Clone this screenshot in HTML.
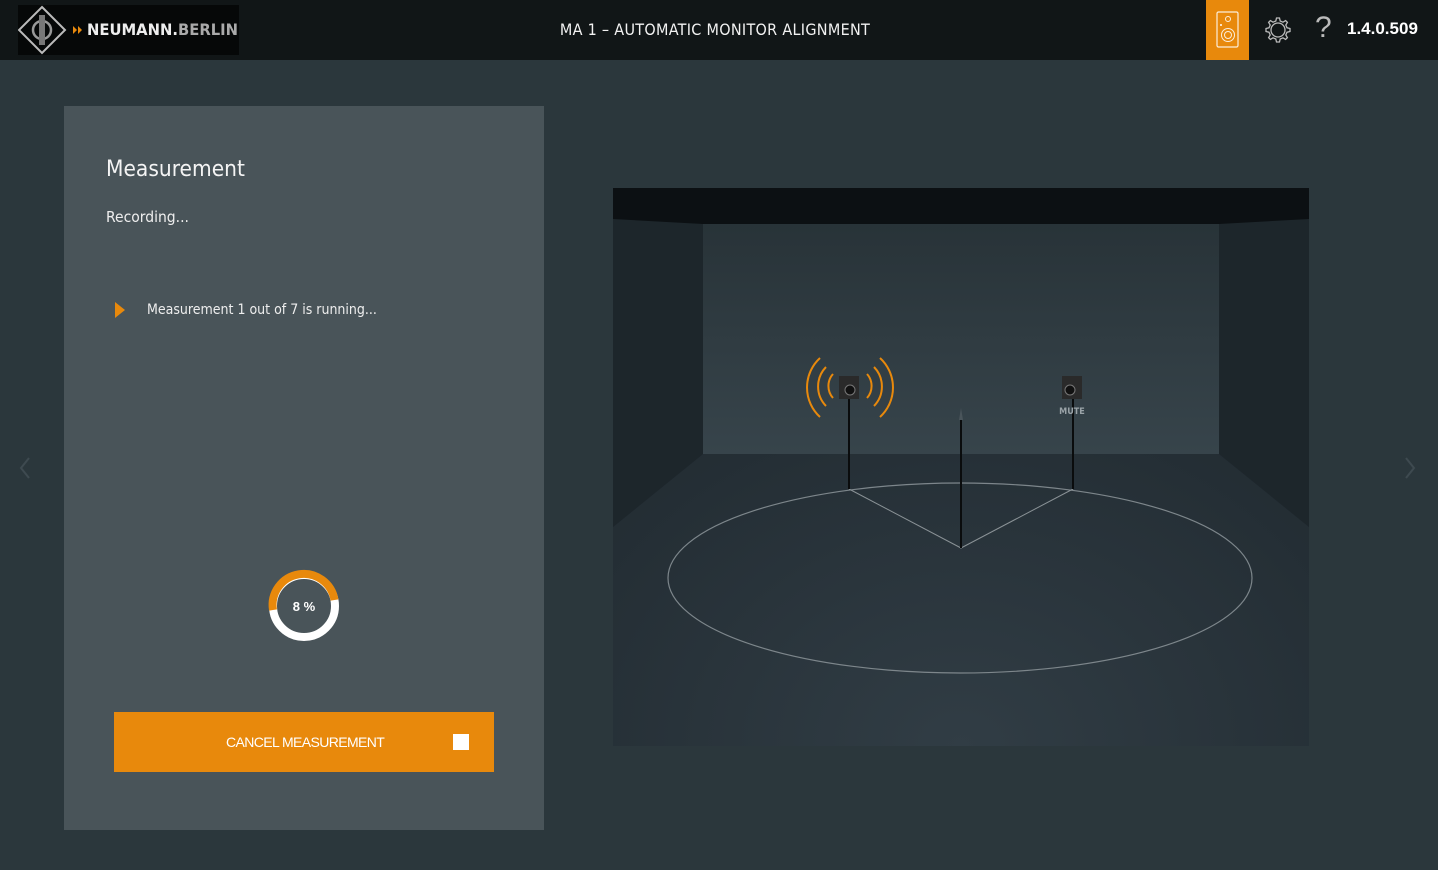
<!DOCTYPE html>
<html><head><meta charset="utf-8"><style>
*{margin:0;padding:0;box-sizing:border-box}
body{width:1438px;height:870px;overflow:hidden;background:#2b373c;font-family:"DejaVu Sans Condensed","Liberation Sans",sans-serif;color:#fff;position:relative}
.hdr{position:absolute;left:0;top:0;width:1438px;height:60px;background:#111617}
.logo{position:absolute;left:18px;top:5px;width:221px;height:50px;background:#060808}
.title{position:absolute;left:-4px;width:1438px;top:20px;text-align:center;font-size:16px;letter-spacing:0.3px;color:#f2f2f2}
.spk{position:absolute;left:1206px;top:0;width:43px;height:60px;background:#e8890c}
.ver{position:absolute;left:1347px;top:19px;font-family:"Liberation Sans",sans-serif;font-weight:bold;font-size:17px;color:#fff}
.panel{position:absolute;left:64px;top:106px;width:480px;height:724px;background:#495459}
.h1{position:absolute;left:106px;top:156px;font-size:22.5px;color:#f4f4f4}
.rec{position:absolute;left:106px;top:208px;font-size:15.5px;color:#eee}
.run{position:absolute;left:147px;top:302px;font-size:14px;color:#eee}
.tri{position:absolute;left:115px;top:302px;width:0;height:0;border-left:10px solid #e8890c;border-top:8px solid transparent;border-bottom:8px solid transparent}
.btn{position:absolute;left:114px;top:712px;width:380px;height:60px;background:#e8890c}
.btn span{position:absolute;left:112px;top:22px;font-family:"Liberation Sans",sans-serif;font-size:14px;letter-spacing:-0.6px;color:#fff}
.btn i{position:absolute;left:339px;top:22px;width:16px;height:16px;background:#fff}
</style></head><body>
<div class="hdr">
 <div class="logo">
  <svg width="221" height="50" viewBox="0 0 221 50">
   <polygon points="24,2 47,25 24,48 1,25" fill="none" stroke="#bbb" stroke-width="2"/>
   <circle cx="24" cy="25" r="9" fill="none" stroke="#999" stroke-width="2.5"/>
   <rect x="21" y="10" width="6" height="30" fill="#777"/>
   <polygon points="55,21 59,25 55,29" fill="#e8890c"/><polygon points="60,21 64,25 60,29" fill="#e8890c"/>
   <text x="69" y="30" font-family="DejaVu Sans Condensed, Liberation Sans, sans-serif" font-weight="bold" font-size="16" fill="#eee" textLength="151" lengthAdjust="spacingAndGlyphs">NEUMANN.<tspan fill="#aaa">BERLIN</tspan></text>
  </svg>
 </div>
 <div class="title">MA 1 – AUTOMATIC MONITOR ALIGNMENT</div>
 <div class="spk"><svg width="43" height="60"><rect x="11" y="12" width="21" height="35" rx="1.5" fill="none" stroke="#fff" stroke-width="1.2" opacity=".85"/><circle cx="22" cy="19" r="2.5" fill="none" stroke="#fff" opacity=".85"/><circle cx="22" cy="35" r="6.5" fill="none" stroke="#fff" opacity=".85"/><circle cx="22" cy="35" r="3.5" fill="none" stroke="#fff" opacity=".85"/><circle cx="15" cy="25" r="1" fill="#fff"/></svg></div>
 <svg style="position:absolute;left:1264px;top:16px" width="28" height="28" viewBox="-14 -14 28 28"><g fill="none" stroke="#bbb" stroke-width="1.3"><circle r="7"/><path d="M-1.5,-12 L1.5,-12 L2.2,-9 L5,-7.8 L7.6,-9.4 L9.4,-7.6 L7.8,-5 L9,-2.2 L12,-1.5 L12,1.5 L9,2.2 L7.8,5 L9.4,7.6 L7.6,9.4 L5,7.8 L2.2,9 L1.5,12 L-1.5,12 L-2.2,9 L-5,7.8 L-7.6,9.4 L-9.4,7.6 L-7.8,5 L-9,2.2 L-12,1.5 L-12,-1.5 L-9,-2.2 L-7.8,-5 L-9.4,-7.6 L-7.6,-9.4 L-5,-7.8 L-2.2,-9 Z"/></g></svg>
 <div style="position:absolute;left:1315px;top:11px;font-family:'Liberation Sans',sans-serif;font-size:30px;color:#bbb;font-weight:300">?</div>
 <div class="ver">1.4.0.509</div>
</div>
<svg style="position:absolute;left:18px;top:456px" width="14" height="24"><path d="M11,2 L3,12 L11,22" fill="none" stroke="#3e4a50" stroke-width="2"/></svg>
<svg style="position:absolute;left:1403px;top:456px" width="14" height="24"><path d="M3,2 L11,12 L3,22" fill="none" stroke="#3e4a50" stroke-width="2"/></svg>
<div class="panel"></div>
<div class="h1">Measurement</div>
<div class="rec">Recording...</div>
<div class="tri"></div>
<div class="run">Measurement 1 out of 7 is running...</div>
<svg style="position:absolute;left:264px;top:566px" width="80" height="80" viewBox="-40 -40 80 80">
 <circle r="31" fill="none" stroke="#fff" stroke-width="8"/>
 <path d="M-31,4 A31,31 0 0 1 30.5,-6" fill="none" stroke="#e8890c" stroke-width="8"/>
 <text x="0" y="5" text-anchor="middle" font-family="Liberation Sans,sans-serif" font-weight="bold" font-size="13" fill="#fff">8 %</text>
</svg>
<div class="btn"><span>CANCEL MEASUREMENT</span><i></i></div>
<svg style="position:absolute;left:613px;top:188px" width="696" height="558" viewBox="613 188 696 558">
 <defs>
  <linearGradient id="bw" x1="0" y1="0" x2="0" y2="1"><stop offset="0" stop-color="#283338"/><stop offset="1" stop-color="#37444b"/></linearGradient>
  <radialGradient id="fl" cx="0.5" cy="1" r="0.9"><stop offset="0" stop-color="#313d45"/><stop offset="1" stop-color="#1e272d"/></radialGradient>
 </defs>
 <rect x="613" y="188" width="696" height="558" fill="url(#fl)"/>
 <polygon points="613,188 703,224 703,454 613,527" fill="#1d262b"/>
 <polygon points="1309,188 1219,224 1219,454 1309,527" fill="#1d262b"/>
 <rect x="703" y="224" width="516" height="230" fill="url(#bw)"/>
 <polygon points="613,188 1309,188 1309,219 1219,224 703,224 613,219" fill="#0c1013"/>
 <ellipse cx="960" cy="578" rx="292" ry="95" fill="none" stroke="#7d868b" stroke-width="1.2"/>
 <polyline points="849,489 961,548 1073,489" fill="none" stroke="#8a9296" stroke-width="1"/>
 <line x1="849" y1="398" x2="849" y2="489" stroke="#0a0c0d" stroke-width="2"/>
 <line x1="1073" y1="398" x2="1073" y2="489" stroke="#0a0c0d" stroke-width="2"/>
 <line x1="961" y1="420" x2="961" y2="548" stroke="#0a0c0d" stroke-width="2"/>
 <path d="M959,420 L961,408 L963,420 Z" fill="#4a555b"/>
 <rect x="839" y="376" width="20" height="23" fill="#2a2a2a"/><circle cx="850" cy="390" r="5" fill="#111" stroke="#777"/>
 <rect x="1062" y="376" width="20" height="23" fill="#2a2a2a"/><circle cx="1070" cy="390" r="5" fill="#111" stroke="#777"/>
 <text x="1072" y="414" text-anchor="middle" font-family="DejaVu Sans Condensed,sans-serif" font-weight="bold" font-size="9" fill="#9aa3a8">MUTE</text>
 <g fill="none" stroke="#e8890c" stroke-width="2">
  <path d="M833,374 A18,18 0 0 0 833,398"/><path d="M826,367 A28,28 0 0 0 826,406"/><path d="M820,358 A40,40 0 0 0 820,417"/>
  <path d="M867,374 A18,18 0 0 1 867,398"/><path d="M874,367 A28,28 0 0 1 874,406"/><path d="M880,358 A40,40 0 0 1 880,417"/>
 </g>
</svg>
</body></html>
